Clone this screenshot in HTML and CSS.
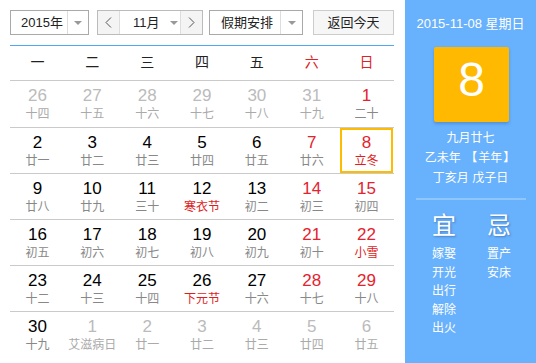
FILE: index.html
```html
<!DOCTYPE html>
<html lang="zh">
<head>
<meta charset="utf-8">
<link rel="stylesheet" href="styles.css">
</head>
<body>
<div class="cal">
  <div class="main">
    <div class="bar">
      <div class="sel sel-year"><span class="sel-text">2015年</span><span class="sel-arrow"><i class="tri"></i></span></div>
      <div class="sel sel-month">
        <span class="nav"><svg width="7" height="11" viewBox="0 0 7 11"><path d="M6 0.5 L1 5.5 L6 10.5" fill="none" stroke="#555" stroke-width="1"/></svg></span>
        <span class="month-text">11月<i class="tri"></i></span>
        <span class="nav"><svg width="7" height="11" viewBox="0 0 7 11"><path d="M1 0.5 L6 5.5 L1 10.5" fill="none" stroke="#555" stroke-width="1"/></svg></span>
      </div>
      <div class="sel sel-hol"><span class="sel-text">假期安排</span><span class="sel-arrow"><i class="tri"></i></span></div>
      <div class="btn">返回今天</div>
    </div>
    <div class="grid">
      <div class="head">
        <span>一</span><span>二</span><span>三</span><span>四</span><span>五</span><span class="red">六</span><span class="red">日</span>
      </div>
      <div class="week">
        <div class="d off"><b>26</b><em>十四</em></div>
        <div class="d off"><b>27</b><em>十五</em></div>
        <div class="d off"><b>28</b><em>十六</em></div>
        <div class="d off"><b>29</b><em>十七</em></div>
        <div class="d off"><b>30</b><em>十八</em></div>
        <div class="d off"><b>31</b><em>十九</em></div>
        <div class="d we"><b>1</b><em>二十</em></div>
      </div>
      <div class="week">
        <div class="d"><b>2</b><em>廿一</em></div>
        <div class="d"><b>3</b><em>廿二</em></div>
        <div class="d"><b>4</b><em>廿三</em></div>
        <div class="d"><b>5</b><em>廿四</em></div>
        <div class="d"><b>6</b><em>廿五</em></div>
        <div class="d we"><b>7</b><em>廿六</em></div>
        <div class="d we today"><b>8</b><em class="fest">立冬</em></div>
      </div>
      <div class="week">
        <div class="d"><b>9</b><em>廿八</em></div>
        <div class="d"><b>10</b><em>廿九</em></div>
        <div class="d"><b>11</b><em>三十</em></div>
        <div class="d"><b>12</b><em class="fest">寒衣节</em></div>
        <div class="d"><b>13</b><em>初二</em></div>
        <div class="d we"><b>14</b><em>初三</em></div>
        <div class="d we"><b>15</b><em>初四</em></div>
      </div>
      <div class="week">
        <div class="d"><b>16</b><em>初五</em></div>
        <div class="d"><b>17</b><em>初六</em></div>
        <div class="d"><b>18</b><em>初七</em></div>
        <div class="d"><b>19</b><em>初八</em></div>
        <div class="d"><b>20</b><em>初九</em></div>
        <div class="d we"><b>21</b><em>初十</em></div>
        <div class="d we"><b>22</b><em class="fest">小雪</em></div>
      </div>
      <div class="week">
        <div class="d"><b>23</b><em>十二</em></div>
        <div class="d"><b>24</b><em>十三</em></div>
        <div class="d"><b>25</b><em>十四</em></div>
        <div class="d"><b>26</b><em class="fest">下元节</em></div>
        <div class="d"><b>27</b><em>十六</em></div>
        <div class="d we"><b>28</b><em>十七</em></div>
        <div class="d we"><b>29</b><em>十八</em></div>
      </div>
      <div class="week">
        <div class="d"><b>30</b><em>十九</em></div>
        <div class="d off"><b>1</b><em>艾滋病日</em></div>
        <div class="d off"><b>2</b><em>廿一</em></div>
        <div class="d off"><b>3</b><em>廿二</em></div>
        <div class="d off"><b>4</b><em>廿三</em></div>
        <div class="d off"><b>5</b><em>廿四</em></div>
        <div class="d off"><b>6</b><em>廿五</em></div>
      </div>
    </div>
  </div>
  <div class="side">
    <div class="side-date">2015-11-08 星期日</div>
    <div class="big-day">8</div>
    <div class="lunar">
      <div>九月廿七</div>
      <div>乙未年 <span class="br">【</span>羊年<span class="br">】</span></div>
      <div>丁亥月 戊子日</div>
    </div>
    <div class="divider"></div>
    <div class="yiji">
      <div class="col">
        <div class="yj-title">宜</div>
        <div class="yj-item">嫁娶</div>
        <div class="yj-item">开光</div>
        <div class="yj-item">出行</div>
        <div class="yj-item">解除</div>
        <div class="yj-item">出火</div>
      </div>
      <div class="col">
        <div class="yj-title">忌</div>
        <div class="yj-item">置产</div>
        <div class="yj-item">安床</div>
      </div>
    </div>
  </div>
</div>
</body>
</html>
```
FILE: styles.css
```css
* { box-sizing: border-box; }
html, body { margin: 0; padding: 0; background: #fff; }
body {
  font-family: "Liberation Sans", "Noto Sans CJK SC", sans-serif;
  color: #000;
  width: 536px;
  height: 363px;
  overflow: hidden;
}
.cal { display: flex; height: 363px; }
.main { width: 405px; padding: 10px 11px 0 10px; }
.bar { display: flex; height: 25px; }
.sel {
  display: flex;
  height: 25px;
  border: 1px solid #a9a9a9;
  background: #fff;
  font-size: 13px;
  line-height: 23px;
  color: #222;
}
.sel-year { width: 79px; }
.sel-year .sel-text { width: 56px; padding-left: 10px; }
.sel-arrow {
  flex: 1;
  border-left: 1px solid #ddd;
  display: flex; align-items: center; justify-content: center;
}
.tri {
  display: inline-block;
  width: 0; height: 0;
  border-left: 4px solid transparent;
  border-right: 4px solid transparent;
  border-top: 4px solid #999;
}
.sel-month { width: 106px; margin-left: 8px; border-color: #bbb; }
.nav {
  width: 22px;
  background: #f4f4f4;
  display: flex; align-items: center; justify-content: center;
}
.nav:first-child { border-right: 1px solid #ddd; }
.nav:last-child { border-left: 1px solid #ddd; }
.month-text {
  flex: 1;
  padding-left: 13px;
  display: flex; align-items: center; gap: 10px;
}
.sel-hol { width: 94px; margin-left: 6px; }
.sel-hol .sel-text { width: 70px; padding-left: 11px; }
.btn {
  width: 81px;
  margin-left: 10px;
  height: 25px;
  border: 1px solid #ccc;
  background: #f6f6f6;
  font-size: 13px;
  line-height: 23px;
  text-align: center;
  color: #222;
}
.grid { margin-top: 10px; border-top: 1px solid #4ea8f4; }
.head {
  display: grid;
  grid-template-columns: repeat(7, 1fr);
  height: 35px;
  border-bottom: 1px solid #cacaca;
  font-size: 14px;
  line-height: 33px;
  text-align: center;
  color: #222;
}
.red { color: #e02222; }
.week {
  display: grid;
  grid-template-columns: repeat(7, 1fr);
  height: 46px;
}
.week + .week { border-top: 1px solid #cacaca; }
.d {
  display: flex;
  flex-direction: column;
  align-items: center;
  padding-top: 4px;
}
.d b {
  font-weight: normal;
  font-size: 17px;
  line-height: 21px;
  color: #000;
}
.d em {
  font-style: normal;
  font-size: 12px;
  line-height: 17px;
  color: #888;
}
.d.we b { color: #e5222e; }
.d.off b { color: #bbb; }
.d.off em { color: #aaa; }
.d em.fest { color: #e01c1c; }
.d.today {
  border: 2px solid #ffbb00;
  margin: 0 1px 0 1px;
  padding-top: 2px;
  height: 45px;
}
.side {
  flex: 1;
  background: #68b1fc;
  color: #fff;
  display: flex;
  flex-direction: column;
  align-items: center;
}
.side-date {
  margin-top: 16px;
  font-size: 13px;
  line-height: 16px;
}
.big-day {
  margin-top: 15px;
  width: 75px;
  height: 75px;
  background: #ffb900;
  border-radius: 2px;
  box-shadow: 0 2px 3px rgba(40, 90, 160, 0.35);
  font-size: 48px;
  line-height: 66px;
  text-align: center;
  margin-left: 2px;
}
.lunar {
  margin-top: 6px;
  font-size: 12px;
  line-height: 20px;
  text-align: center;
}
.br { padding: 0 1px; }
.divider {
  margin-top: 10px;
  width: 110px;
  height: 2px;
  background: #8fc6fd;
}
.yiji {
  display: flex;
  gap: 31px;
  margin-top: 13px;
  margin-left: 2px;
}
.col { width: 24px; }
.yj-title {
  font-size: 24px;
  line-height: 26px;
  text-shadow: 1px 1px 2px rgba(40, 80, 140, 0.5);
  margin-bottom: 6px;
}
.yj-item {
  font-size: 12px;
  line-height: 18.5px;
}
```
